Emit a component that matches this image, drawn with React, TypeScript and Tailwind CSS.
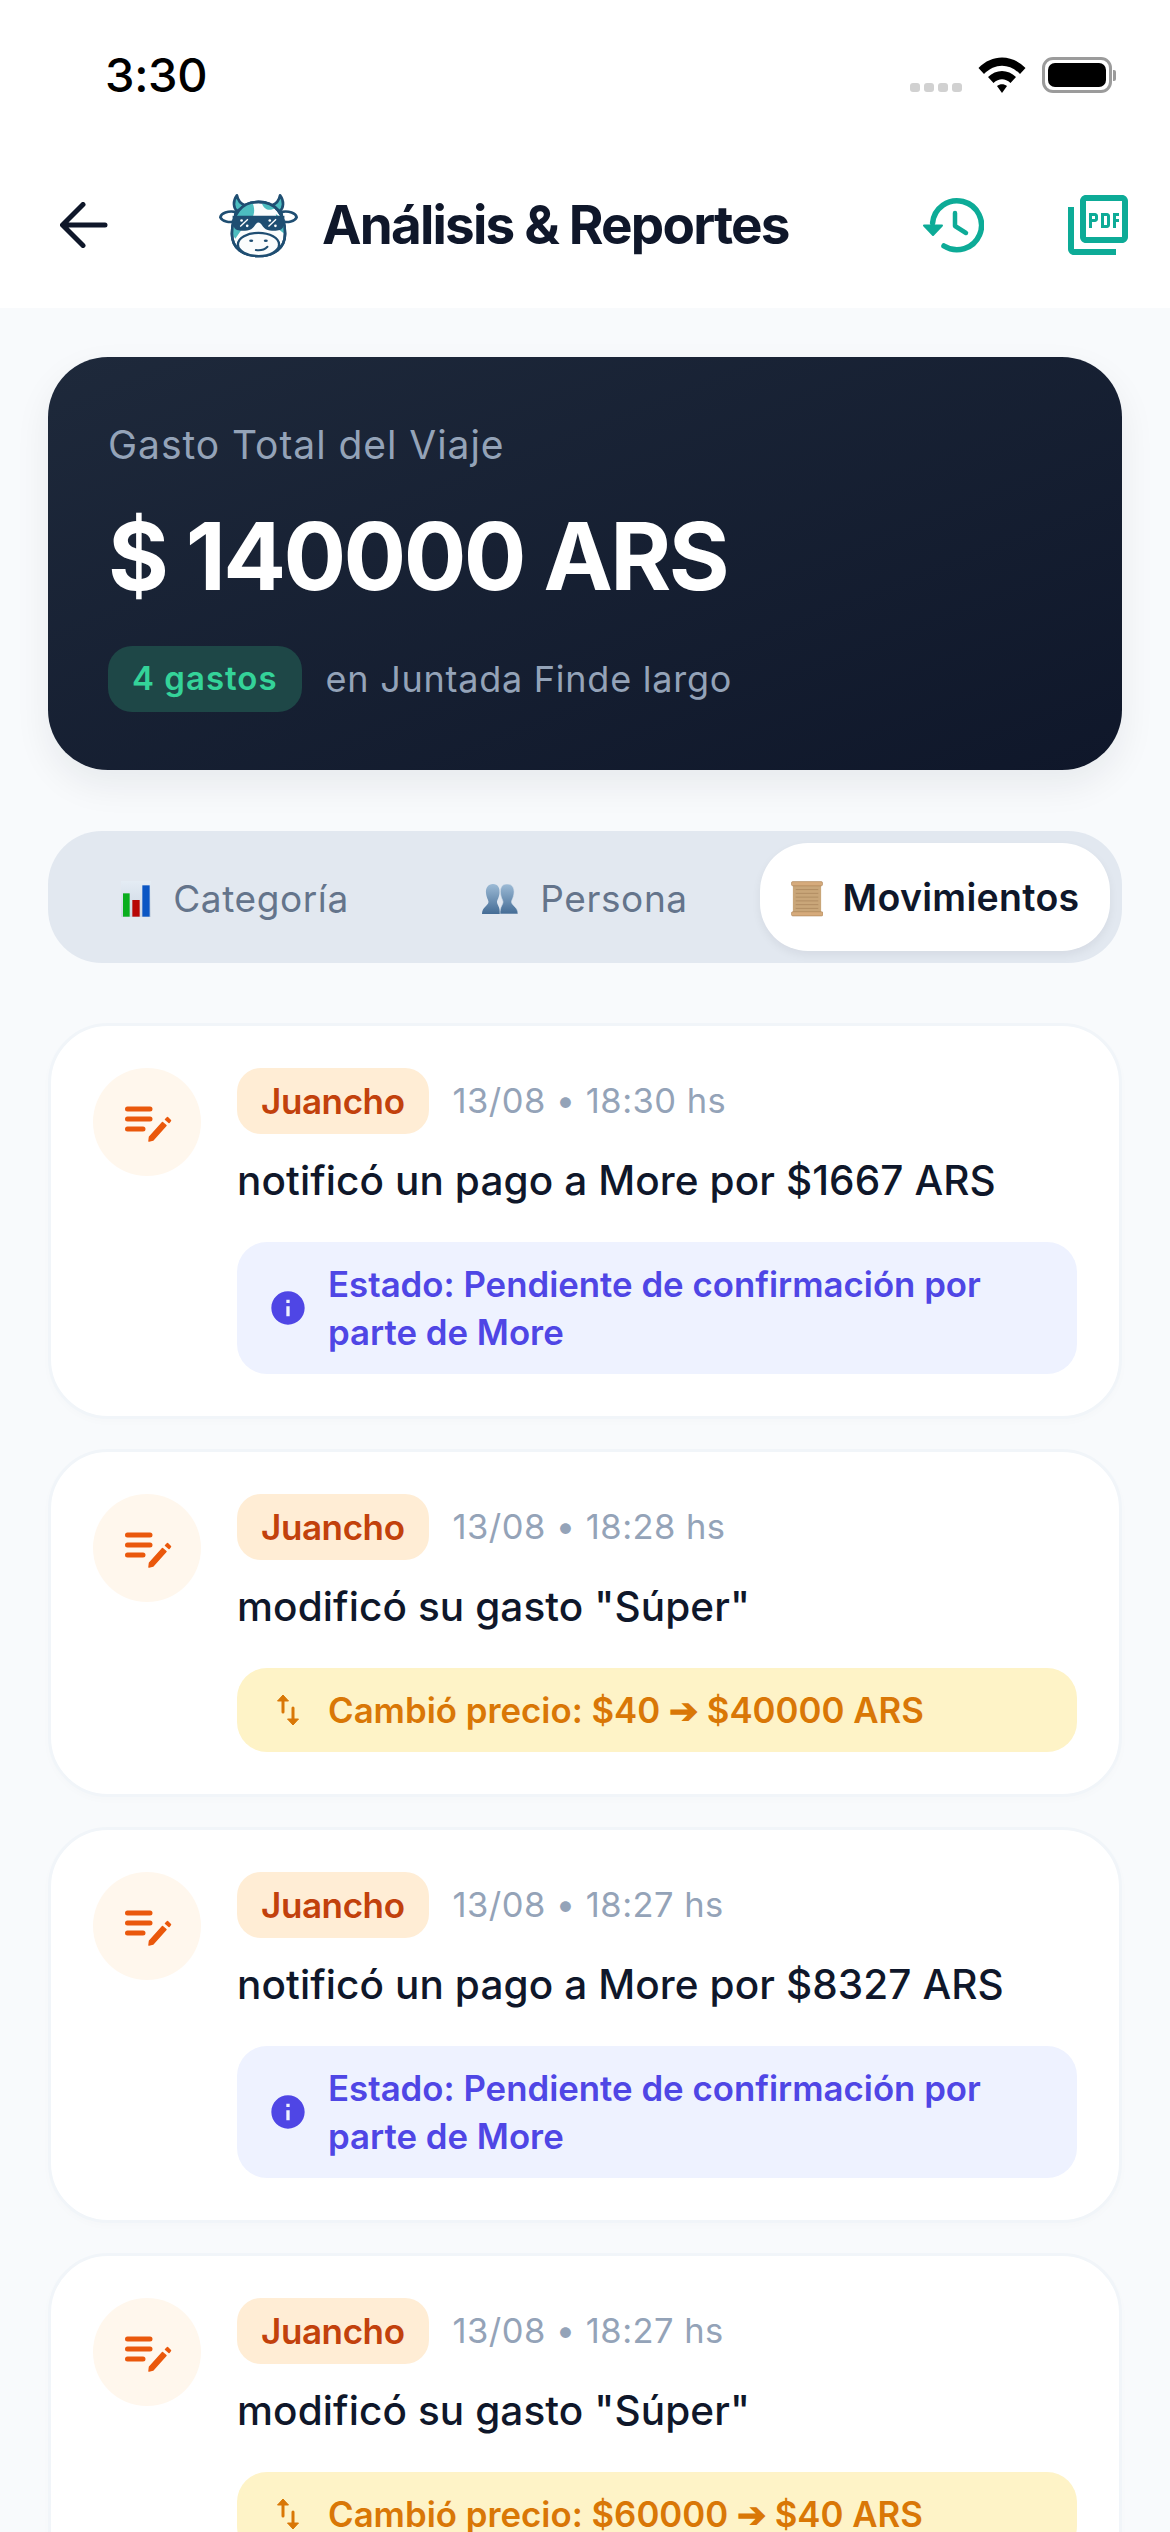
import { MdOutlinePictureAsPdf, MdInfo } from "react-icons/md";

const navy = "#1f4e72";

function Cow() {
  return (
    <svg viewBox="75 65 250 200" className="w-[83px] h-[67px] shrink-0" aria-hidden>
      <g stroke={navy} strokeWidth="8" strokeLinejoin="round">
        <path d="M135 74 C122 92 124 112 136 122 L160 104 C146 100 138 90 135 74Z" fill="#4dbdc0" />
        <path d="M265 74 C278 92 276 112 264 122 L240 104 C254 100 262 90 265 74Z" fill="#4dbdc0" />
        <path d="M130 124 C108 120 88 128 85 140 C90 152 112 158 130 152Z" fill="#fff" />
        <path d="M270 124 C292 120 312 128 315 140 C310 152 288 158 270 152Z" fill="#fff" />
        <path d="M200 94 C150 94 120 130 120 190 C120 235 155 257 200 257 C245 257 280 235 280 190 C280 130 250 94 200 94Z" fill="#fbfdfd" />
      </g>
      <path d="M182 97 C150 100 128 122 123 160 L170 150 C190 140 190 115 182 97Z" fill="#4dbdc0" />
      <path d="M210 97 C214 112 228 122 242 116 L256 112 C242 102 226 97 210 97Z" fill="#4dbdc0" />
      <path d="M252 130 L278 150 L278 190 L262 178Z" fill="#4dbdc0" />
      <path d="M122 170 L150 176 L130 205 L121 190Z" fill="#4dbdc0" />
      <path d="M200 94 C150 94 120 130 120 190 C120 235 155 257 200 257 C245 257 280 235 280 190 C280 130 250 94 200 94Z" fill="none" stroke={navy} strokeWidth="8" />
      <ellipse cx="200" cy="222" rx="62" ry="35" fill="#fbfdfd" stroke={navy} strokeWidth="7" />
      <path d="M122 136 H278 V148 L274 170 C270 182 240 184 222 176 C212 170 208 156 200 156 C192 156 188 170 178 176 C160 184 130 182 126 170 L122 148Z" fill={navy} />
      <path d="M145 168 L168 146 M230 168 L253 146" stroke="#fff" strokeWidth="4" />
      <circle cx="149" cy="150" r="4" fill="#fff" />
      <circle cx="166" cy="166" r="4" fill="#fff" />
      <circle cx="234" cy="150" r="4" fill="#fff" />
      <circle cx="251" cy="166" r="4" fill="#fff" />
      <ellipse cx="178" cy="211" rx="6" ry="4" fill={navy} />
      <ellipse cx="222" cy="211" rx="6" ry="4" fill={navy} />
      <path d="M192 239 C205 241 218 238 227 229" fill="none" stroke={navy} strokeWidth="6" strokeLinecap="round" />
    </svg>
  );
}

function BackArrow() {
  return (
    <svg viewBox="0 0 48 46" className="w-[48px] h-[46px]" aria-hidden>
      <path d="M45 23 H3 M23 2.5 L2.5 23 L23 43.5" fill="none" stroke="#0f172a" strokeWidth="5" strokeLinecap="round" strokeLinejoin="round" />
    </svg>
  );
}

function HistoryIcon() {
  return (
    <svg viewBox="0 0 64 60" className="w-[64px] h-[60px]" aria-hidden>
      <path d="M12.6 28 A 24.5 24.5 0 1 1 24 51" fill="none" stroke="#0dab97" strokeWidth="5.5" strokeLinecap="round" />
      <path d="M4 30.5 H22 L13 40Z" fill="#0dab97" stroke="#0dab97" strokeWidth="2" strokeLinejoin="round" />
      <path d="M35 18 V31 L46 38" fill="none" stroke="#0dab97" strokeWidth="4.5" strokeLinecap="round" strokeLinejoin="round" />
    </svg>
  );
}

function EditNote() {
  return (
    <svg viewBox="0 0 60 60" className="w-[60px] h-[60px]" aria-hidden>
      <path d="M10.5 17 H33 M10.5 27 H33 M10.5 37 H26" fill="none" stroke="#ea580c" strokeWidth="5" strokeLinecap="round" />
      <path d="M32 49 L32.5 45 L45.5 30.5 L49 33.5 L36 48 Z" fill="#ea580c" stroke="#ea580c" strokeWidth="1.5" strokeLinejoin="round" />
      <path d="M48.5 27.5 L50.5 25.5 L53.5 28.5 L52 30.5 Z" fill="#ea580c" stroke="#ea580c" strokeWidth="1.5" strokeLinejoin="round" />
    </svg>
  );
}

function SwapIcon() {
  return (
    <svg viewBox="0 0 40 40" className="w-[40px] h-[40px]" aria-hidden>
      <path d="M15 9 V22 M25 18 V31" fill="none" stroke="#d97706" strokeWidth="3" strokeLinecap="round" />
      <path d="M15 5 L20.5 11 H9.5 Z M25 35 L30.5 29 H19.5 Z" fill="#d97706" stroke="#d97706" strokeWidth="1" strokeLinejoin="round" />
    </svg>
  );
}

function ChartEmoji() {
  return (
    <svg viewBox="0 0 90 108" className="w-[30px] h-[36px]" aria-hidden>
      <defs>
        <linearGradient id="cbg" x1="0" y1="0" x2="0" y2="1">
          <stop offset="0" stopColor="#e4ecf4" />
          <stop offset="1" stopColor="#ccd6e2" />
        </linearGradient>
      </defs>
      <rect width="90" height="108" fill="url(#cbg)" />
      <rect x="6" y="37" width="20" height="70" fill="#0aae1e" />
      <rect x="34" y="57" width="22" height="50" fill="#b80606" />
      <rect x="64" y="13" width="22" height="94" fill="#0b56c4" />
    </svg>
  );
}

function PeopleEmoji() {
  return (
    <svg viewBox="0 0 36 30" className="w-[36px] h-[30px]" aria-hidden>
      <defs>
        <linearGradient id="pbg" x1="0" y1="0" x2="0" y2="1">
          <stop offset="0" stopColor="#9dbbd6" />
          <stop offset="1" stopColor="#446c95" />
        </linearGradient>
      </defs>
      <path d="M11 0 C16 0 18 4 17.5 9 C17 14 15 16 15 18 C15 21 18 22 18 30 H0 C0 23 6 22 6.5 18 C6.5 16 4.5 14 4 9 C3.5 4 6 0 11 0Z" fill="url(#pbg)" />
      <path d="M25 0 C30 0 32.5 4 32 9 C31.5 14 29.5 16 29.5 18 C30 22 36 23 36 30 H18 C18 22 21 21 21 18 C21 16 19 14 18.5 9 C18 4 20 0 25 0Z" fill="url(#pbg)" stroke="#d3dee9" strokeWidth="0.6" />
    </svg>
  );
}

function ScrollEmoji() {
  return (
    <svg viewBox="0 0 34 38" className="w-[32px] h-[36px]" aria-hidden>
      <rect x="2" y="3" width="30" height="32" fill="#c9a679" />
      <path d="M5 9 H29 M5 13 H29 M5 17 H29 M5 21 H29 M5 25 H29 M5 29 H29" stroke="#a9865c" strokeWidth="0.8" />
      <rect x="0.5" y="0.5" width="33" height="4.5" rx="1.5" fill="#d6ab7c" stroke="#a87f52" strokeWidth="0.6" />
      <rect x="0.5" y="32.5" width="33.5" height="4.5" rx="1.5" fill="#d6ab7c" stroke="#a87f52" strokeWidth="0.6" />
    </svg>
  );
}

function StatusBar() {
  return (
    <div className="h-[148px] flex items-center justify-between pl-[105px] pr-[54px]">
      <span className="text-[47px] font-medium text-black tracking-[-0.3px] leading-none">3:30</span>
      <div className="flex items-end gap-[16px] pt-[2px]">
        <div className="flex gap-[4px] pb-[1px]">
          {[0, 1, 2, 3].map((i) => (
            <span key={i} className="w-[10px] h-[9px] rounded-[3px] bg-[#d1d1d1]" />
          ))}
        </div>
        <svg viewBox="0 0 48 36" className="w-[48px] h-[36px]" aria-hidden>
          <path d="M0.5 11 C14 -3 34 -3 47.5 11 L42 17 C31 6 17 6 6 17Z" fill="#000" />
          <path d="M10 20 C18 12 30 12 38 20 L32.5 26 C27 21 21 21 15.5 26Z" fill="#000" />
          <path d="M19 29 C22 26.5 26 26.5 29 29 L24 36Z" fill="#000" />
        </svg>
        <div className="flex items-center">
          <div className="w-[70px] h-[36px] rounded-[11px] border-[3px] border-[#9b9b9b] p-[3px]">
            <div className="w-full h-full rounded-[7px] bg-black" />
          </div>
          <span className="w-[3px] h-[11px] rounded-r-[2px] bg-[#9b9b9b] ml-[1px]" />
        </div>
      </div>
    </div>
  );
}

function Header() {
  return (
    <div className="h-[160px] pb-[6px] flex items-center pl-[60px] pr-[36px]">
      <BackArrow />
      <div className="ml-[109px] flex items-center gap-[22px]">
        <Cow />
        <h1 className="text-[53px] font-bold text-[#0f172a] tracking-[-1.8px] leading-none whitespace-nowrap">
          Análisis &amp; Reportes
        </h1>
      </div>
      <div className="ml-auto flex items-center gap-[78px]">
        <HistoryIcon />
        <MdOutlinePictureAsPdf className="w-[72px] h-[72px] text-[#0dab97]" />
      </div>
    </div>
  );
}

function Hero() {
  return (
    <div className="h-[413px] rounded-[60px] bg-gradient-to-br from-[#1e293b] to-[#0f172a] shadow-[0_15px_36px_rgba(15,23,42,0.07)] px-[60px] pt-[66px]">
      <p className="text-[39px] leading-[44px] text-[#94a3b8] tracking-[0.95px]">Gasto Total del Viaje</p>
      <p className="mt-[39px] text-[93px] leading-[100px] font-bold text-white tracking-[-2.6px]">$ 140000 ARS</p>
      <div className="mt-[40px] flex items-center gap-[24px]">
        <span className="h-[66px] px-[24px] rounded-[24px] bg-[#1e4747] text-[#34d399] text-[33px] font-semibold tracking-[1px] flex items-center">
          4 gastos
        </span>
        <span className="text-[36px] text-[#94a3b8] tracking-[0.75px]">en Juntada Finde largo</span>
      </div>
    </div>
  );
}

function Tabs() {
  return (
    <div className="mt-[61px] h-[132px] rounded-[54px] bg-[#e2e8f0] p-[12px] flex">
      <div className="flex-1 pt-[3px] flex items-center justify-center gap-[22px] text-[37px] text-[#64748b] tracking-[0.6px]">
        <ChartEmoji />
        <span>Categoría</span>
      </div>
      <div className="flex-1 pt-[3px] flex items-center justify-center gap-[22px] text-[37px] text-[#64748b] tracking-[0.6px]">
        <PeopleEmoji />
        <span>Persona</span>
      </div>
      <div className="flex-1 pt-[3px] flex items-center justify-center gap-[20px] rounded-[48px] bg-white shadow-[0_4px_10px_rgba(15,23,42,0.06)] text-[37.5px] font-semibold text-[#0f172a] tracking-[0.3px]">
        <ScrollEmoji />
        <span>Movimientos</span>
      </div>
    </div>
  );
}

type Item = { time: string; text: string; kind: "info" | "swap"; detail: string };

const items: Item[] = [
  { time: "13/08 • 18:30 hs", text: "notificó un pago a More por $1667 ARS", kind: "info", detail: "Estado: Pendiente de confirmación por parte de More" },
  { time: "13/08 • 18:28 hs", text: 'modificó su gasto "Súper"', kind: "swap", detail: "Cambió precio: $40 ➔ $40000 ARS" },
  { time: "13/08 • 18:27 hs", text: "notificó un pago a More por $8327 ARS", kind: "info", detail: "Estado: Pendiente de confirmación por parte de More" },
  { time: "13/08 • 18:27 hs", text: 'modificó su gasto "Súper"', kind: "swap", detail: "Cambió precio: $60000 ➔ $40 ARS" },
];

function Card({ item }: { item: Item }) {
  const info = item.kind === "info";
  return (
    <div className="shrink-0 rounded-[60px] border-[3px] border-[#f1f5f9] bg-white p-[42px] flex gap-[36px] shadow-[0_3px_9px_rgba(15,23,42,0.015)]">
      <div className="w-[108px] h-[108px] shrink-0 rounded-full bg-[#fff7ed] flex items-center justify-center">
        <EditNote />
      </div>
      <div className="flex-1 min-w-0">
        <div className="flex items-center gap-[24px] h-[66px]">
          <span className="h-[66px] px-[24px] rounded-[24px] bg-[#ffedd5] text-[#c2410c] text-[35px] font-semibold tracking-[-0.4px] flex items-center">
            Juancho
          </span>
          <span className="text-[34.5px] text-[#94a3b8] tracking-[0.45px]">{item.time}</span>
        </div>
        <p className="mt-[20px] text-[40.5px] leading-[54px] font-medium text-[#0f172a] tracking-[0.1px] whitespace-nowrap">{item.text}</p>
        <div
          className={
            info
              ? "mt-[34px] rounded-[30px] bg-[#eef2ff] text-[#4f46e5] py-[18px] pl-[31px] pr-[30px] flex items-center gap-[20px]"
              : "mt-[34px] rounded-[30px] bg-[#fef3c7] text-[#d97706] py-[18px] pl-[31px] pr-[30px] flex items-center gap-[20px]"
          }
        >
          {info ? <MdInfo className="w-[40px] h-[40px] shrink-0" /> : <span className="shrink-0"><SwapIcon /></span>}
          <p className="text-[34.8px] leading-[48px] font-semibold">{item.detail}</p>
        </div>
      </div>
    </div>
  );
}

export default function App() {
  return (
    <div className="w-[1170px] h-[2532px] overflow-hidden bg-[#f8fafc] flex flex-col" style={{ fontFamily: "Inter, 'Noto Sans', sans-serif" }}>
      <div className="bg-white">
        <StatusBar />
        <Header />
      </div>
      <div className="px-[48px] pt-[49px]">
        <Hero />
        <Tabs />
        <div className="mt-[60px] flex flex-col gap-[30px]">
          {items.map((it, i) => (
            <Card key={i} item={it} />
          ))}
        </div>
      </div>
    </div>
  );
}
